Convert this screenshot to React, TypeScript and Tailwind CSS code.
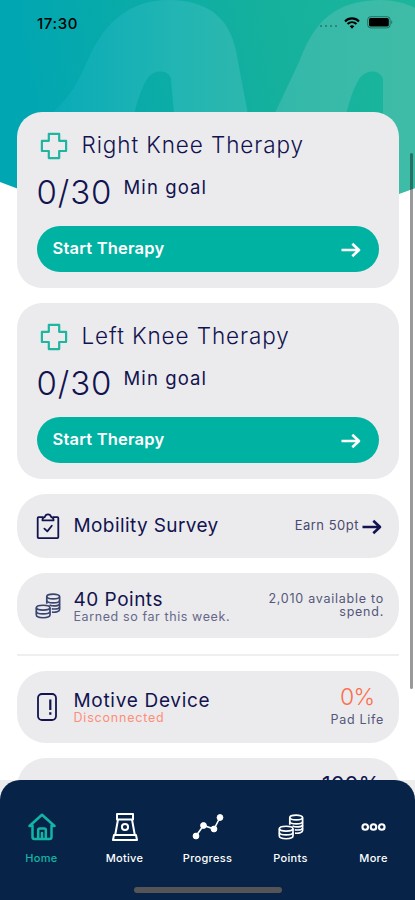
import React from 'react';

interface IconProps {
  className?: string;
}

const CrossIcon: React.FC<IconProps> = ({ className }) => (
  <svg className={className} viewBox="0 0 28 28" fill="none" stroke="#1fb5a0" strokeWidth="2.2">
    <path d="M8.8 1.9H19.2V8.8H26.1V19H19.2V26.1H8.8V19H1.9V8.8H8.8Z" strokeLinejoin="round" />
  </svg>
);

const ArrowIcon: React.FC<IconProps> = ({ className }) => (
  <svg className={className} viewBox="0 0 20 16" fill="none" stroke="currentColor" strokeWidth="2.6">
    <path d="M0.5 8H18M11.3 1.8L18 8L11.3 14.2" strokeLinejoin="round" />
  </svg>
);

const ClipboardIcon: React.FC<IconProps> = ({ className }) => (
  <svg className={className} viewBox="0 0 24 27" fill="none" stroke="currentColor" strokeWidth="1.8" strokeLinejoin="round">
    <path d="M7 4.2H2.6Q1.7 4.2 1.7 5.1V24.3Q1.7 25.2 2.6 25.2H21.4Q22.3 25.2 22.3 24.3V5.1Q22.3 4.2 21.4 4.2H17" />
    <path d="M6.5 7.4V5.9Q7 4.3 8.8 4C9.3 2.2 10.5 1.3 12 1.3S14.7 2.2 15.2 4Q17 4.3 17.5 5.9V7.4Z" />
    <path d="M8.4 15.6L11.3 18.4L15.8 12.7" strokeLinecap="round" />
  </svg>
);

const CoinsIcon: React.FC<IconProps> = ({ className }) => (
  <svg className={className} viewBox="0 0 26 26" fill="none" stroke="currentColor" strokeWidth="1.7">
    <path d="M11.8 10.8V3.6C11.8 0.3 24.6 0.3 24.6 3.6V16.5C24.6 18.6 20.8 19.6 17 19.1" />
    <path d="M11.8 3.6C12.5 6.6 23.9 6.6 24.6 3.6M11.8 7.6C12.5 10.6 23.9 10.6 24.6 7.6M14.5 12C18 13.6 24 13 24.6 11M16.8 15.8C20.5 16.2 24 15.7 24.6 14.2" />
    <path d="M1.3 14.8C1.3 11.4 15 11.4 15 14.8V21.8C15 25.7 1.3 25.7 1.3 21.8Z" />
    <path d="M1.3 14.8C2 17.8 14.3 17.8 15 14.8M1.3 18.6C2 21.6 14.3 21.6 15 18.6" />
  </svg>
);

const DeviceIcon: React.FC<IconProps> = ({ className }) => (
  <svg className={className} viewBox="0 0 20 28" fill="none" stroke="currentColor">
    <rect x="1" y="1" width="18" height="26" rx="4" strokeWidth="1.8" />
    <path d="M13.3 6.5V17M13.3 19.3V21.8" strokeWidth="2.2" />
  </svg>
);

const HomeIcon: React.FC<IconProps> = ({ className }) => (
  <svg className={className} viewBox="0 0 28 28" fill="none" stroke="currentColor" strokeWidth="2.5" strokeLinejoin="round" strokeLinecap="round">
    <path d="M4.5 12.5L1.5 13L14 1.8L26.5 13L23.5 12.5V24Q23.5 26 21.5 26H6.5Q4.5 26 4.5 24V12.5" />
    <path d="M10.2 25.5V17Q10.2 15.5 11.7 15.5H16.3Q17.8 15.5 17.8 17V25.5M14 20V25.5" />
  </svg>
);

const MotiveIcon: React.FC<IconProps> = ({ className }) => (
  <svg className={className} viewBox="0 0 26 28" fill="none" stroke="currentColor" strokeWidth="2" strokeLinejoin="round">
    <path d="M5 1H21V6.5H5Z" />
    <path d="M6 6.5L3.2 22H22.8L20 6.5M3.2 22H2L1 27H25L24 22H22.8" />
    <circle cx="13" cy="14" r="3.1" />
  </svg>
);

const ProgressIcon: React.FC<IconProps> = ({ className }) => (
  <svg className={className} viewBox="0 0 32 28" fill="currentColor" stroke="currentColor">
    <path d="M4 23L11.5 12.5L22 16L28 4.5" fill="none" strokeWidth="1.6" />
    <circle cx="4" cy="23" r="2.9" />
    <circle cx="11.5" cy="12.5" r="2.9" />
    <circle cx="22" cy="16" r="2.9" />
    <circle cx="28" cy="4.5" r="2.9" />
  </svg>
);

const MoreIcon: React.FC<IconProps> = ({ className }) => (
  <svg className={className} viewBox="0 0 26 26" fill="none" stroke="currentColor" strokeWidth="2.2">
    <circle cx="4.4" cy="12.5" r="2.9" />
    <circle cx="13" cy="12.5" r="2.9" />
    <circle cx="21.6" cy="12.5" r="2.9" />
  </svg>
);

const HeaderArt = () => (
  <svg className="absolute top-0 left-0 h-[240px] w-full" viewBox="0 0 415 240" preserveAspectRatio="none">
    <defs>
      <linearGradient id="sky" gradientUnits="userSpaceOnUse" x1="0" y1="70" x2="415" y2="0">
        <stop offset="0.05" stopColor="#00a6b2" />
        <stop offset="0.65" stopColor="#15b19d" />
        <stop offset="1" stopColor="#1bb69b" />
      </linearGradient>
      <linearGradient id="wave" gradientUnits="userSpaceOnUse" x1="50" y1="0" x2="415" y2="0">
        <stop offset="0" stopColor="#09abb8" />
        <stop offset="0.35" stopColor="#22b5b3" />
        <stop offset="0.7" stopColor="#36b9a9" />
        <stop offset="1" stopColor="#3fbca7" />
      </linearGradient>
    </defs>
    <path d="M0 0H415V188L207 260L0 182Z" fill="url(#sky)" />
    <path
      d="M50 115C82 88 85 58 101 36C116 14 139 0 168 0C207 0 229 17 236 51L248 115H174L171 79C169 69 153 69 147 79C142 87 138 98 134 115Z"
      fill="url(#wave)"
    />
    <path
      d="M274 115L300 60C315 20 336 1 379 0C393 0 406 3 415 8V188L383 200V79C380 69 366 69 359 79C354 88 350 98 346 115Z"
      fill="url(#wave)"
    />
  </svg>
);

const StatusBar = () => (
  <div className="flex h-[112px] items-start justify-between pt-[15px] pr-[21px] pl-[37px] text-black">
    <span className="text-[15px] leading-[17px] font-medium tracking-[0.6px]">17:30</span>
    <div className="flex items-center">
      <div className="mt-[8px] mr-[7px] flex gap-[3px] opacity-35">
        <i className="size-[2px] rounded-full bg-black" />
        <i className="size-[2px] rounded-full bg-black" />
        <i className="size-[2px] rounded-full bg-black" />
        <i className="size-[2px] rounded-full bg-black" />
      </div>
      <svg className="mt-px mr-[7px] h-[12px] w-[16px]" viewBox="0 0 16 12" fill="none" stroke="#000" strokeWidth="2.1">
        <path d="M1 4.4C5 0.4 11 0.4 15 4.4M3.5 7.1C6.1 4.6 9.9 4.6 12.5 7.1" />
        <path d="M8 11.7L5.7 9.3Q8 7.3 10.3 9.3Z" fill="#000" stroke="none" />
      </svg>
      <svg className="mt-px h-[13px] w-[27px]" viewBox="0 0 27 13">
        <rect x="0.7" y="0.7" width="22.4" height="11.2" rx="3" fill="none" stroke="#000" strokeOpacity="0.4" />
        <rect x="2" y="2" width="19.8" height="8.6" rx="1.7" />
        <path d="M24.3 4.2Q26.3 6.2 24.3 8.2Z" fillOpacity="0.45" />
      </svg>
    </div>
  </div>
);

interface TherapyCardProps {
  title: string;
}

const TherapyCard: React.FC<TherapyCardProps> = ({ title }) => (
  <div className="h-[176px] shrink-0 rounded-[25px] bg-[#ebebed] px-5 pt-[18px]">
    <div className="flex h-[30px] items-center">
      <CrossIcon className="ml-[3px] mt-[2px] size-[28px]" />
      <h2 className="ml-[14px] text-[22.5px] leading-[30px] font-light tracking-[0.9px] whitespace-nowrap">{title}</h2>
    </div>
    <div className="mt-[11px] flex h-[42px] items-start">
      <span className="w-[87px] text-[33px] leading-[43px] font-light tracking-[0.9px] whitespace-nowrap">0/30</span>
      <span className="mt-[3px] text-[18.5px] leading-[26px] tracking-[1.1px] whitespace-nowrap">Min goal</span>
    </div>
    <button className="mt-[13px] flex h-[46px] w-[342px] items-center justify-between rounded-full bg-[#00b2a2] pr-[18px] pl-4 text-white">
      <span className="mb-[2px] text-[16.5px] font-semibold tracking-[0.2px]">Start Therapy</span>
      <ArrowIcon className="mt-[2px] h-[16px] w-[20px]" />
    </button>
  </div>
);

const tabs = [
  { label: 'Home', icon: <HomeIcon className="size-[28px]" />, active: true },
  { label: 'Motive', icon: <MotiveIcon className="h-[28px] w-[26px]" /> },
  { label: 'Progress', icon: <ProgressIcon className="h-[28px] w-[32px]" /> },
  { label: 'Points', icon: <CoinsIcon className="size-[26px]" /> },
  { label: 'More', icon: <MoreIcon className="size-[25px]" /> },
];

const App: React.FC = () => {
  return (
    <div className="relative flex h-[900px] w-full flex-col overflow-hidden bg-white font-['Inter',sans-serif] text-[#12134f]">
      <HeaderArt />
      <div className="relative flex min-h-0 flex-1 flex-col">
        <StatusBar />
        <main className="flex min-h-0 flex-1 flex-col gap-[15px] overflow-hidden pr-4 pl-[16.5px]">
          <TherapyCard title="Right Knee Therapy" />
          <TherapyCard title="Left Knee Therapy" />

          <section className="flex h-[64px] shrink-0 items-center rounded-[29px] bg-[#ebebed] pr-[17px] pl-[19px]">
            <ClipboardIcon className="h-[27px] w-[24px]" />
            <span className="ml-[14px] text-[19px] tracking-[0.4px]">Mobility Survey</span>
            <span className="ml-auto text-[13px] tracking-[0.5px] text-[#4a4a70]">Earn 50pt</span>
            <ArrowIcon className="mt-[2px] ml-[3px] h-[16px] w-[20px]" />
          </section>

          <section className="flex h-[65px] shrink-0 items-center rounded-[29px] bg-[#ebebed] pr-[15px] pl-[18px]">
            <CoinsIcon className="size-[26px] text-[#3a456f]" />
            <div className="ml-[13px]">
              <div className="text-[19px] leading-[21px] tracking-[0.5px]">40 Points</div>
              <div className="text-[12.5px] leading-[13px] tracking-[0.6px] whitespace-nowrap text-[#66688a]">Earned so far this week.</div>
            </div>
            <div className="mb-[1px] ml-auto w-[130px] text-right text-[12.5px] leading-[13px] tracking-[0.75px] text-[#55577a]">
              2,010 available to spend.
            </div>
          </section>

          <hr className="mt-px h-[2px] shrink-0 border-0 bg-[#efeff0]" />

          <section className="flex h-[72px] shrink-0 items-center rounded-[29px] bg-[#ebebed] pr-[15px] pl-[20px]">
            <DeviceIcon className="h-[28px] w-[20px]" />
            <div className="ml-[17px]">
              <div className="text-[19px] leading-[21px] tracking-[0.7px]">Motive Device</div>
              <div className="text-[12.5px] leading-[13px] tracking-[0.8px] text-[#ff8d7a]">Disconnected</div>
            </div>
            <div className="ml-auto flex flex-col items-center">
              <div className="text-[23px] leading-[26px] font-light tracking-[-0.5px] text-[#fb6f50]">0%</div>
              <div className="text-[12.5px] leading-[20px] tracking-[0.7px] text-[#55577a]">Pad Life</div>
            </div>
          </section>

          <section className="h-[72px] shrink-0 rounded-[29px] bg-[#ebebed] pt-[10px] pr-[19px] text-right text-[22px]">100%</section>
        </main>
      </div>

      {/* Scroll indicator */}
      <div className="absolute top-[153px] right-[2px] h-[536px] w-[3px] rounded-full bg-black/40" />

      <div className="relative h-[120px] shrink-0 bg-[#ededee]">
        <nav className="flex h-full flex-col rounded-t-[20px] bg-[#072448] text-white">
          <div className="grid grid-cols-5 pt-[33px]">
            {tabs.map((tab) => (
              <div key={tab.label} className={`flex flex-col items-center ${tab.active ? 'text-[#12b5a5]' : ''}`}>
                <div className="flex h-[28px] items-center">{tab.icon}</div>
                <span className="mt-[9px] text-[11px] leading-[16px] font-medium tracking-[0.3px]">{tab.label}</span>
              </div>
            ))}
          </div>
          <div className="mt-auto mb-[7px] h-[6px] w-[148px] self-center rounded-full bg-[#555557]" />
        </nav>
      </div>
    </div>
  );
};

export default App;
